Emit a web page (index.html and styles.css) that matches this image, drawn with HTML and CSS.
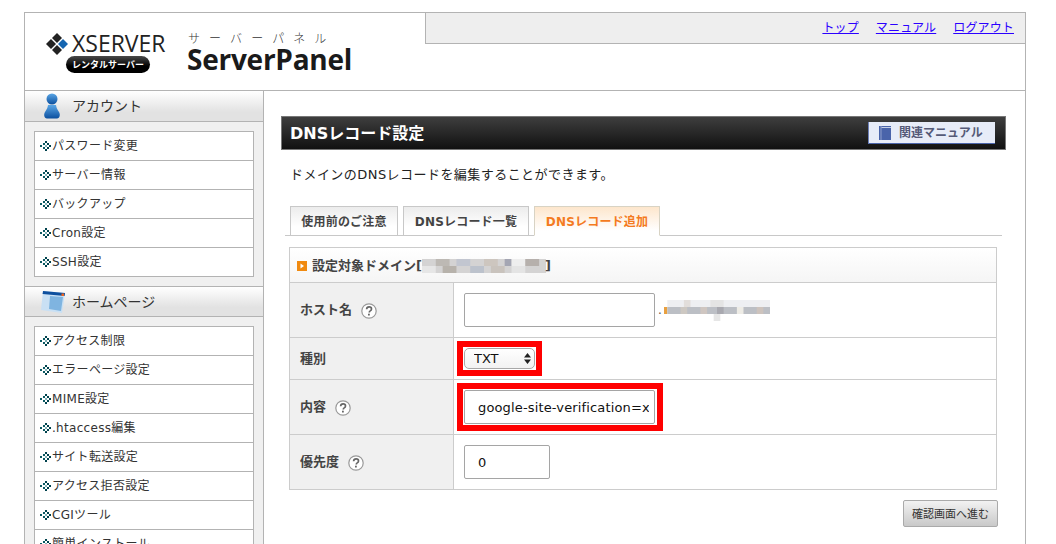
FILE: index.html
```html
<!DOCTYPE html>
<html lang="ja">
<head>
<meta charset="utf-8">
<title>ServerPanel</title>
<link rel="stylesheet" href="styles.css">
</head>
<body>
<svg class="defs" width="0" height="0" aria-hidden="true">
  <defs>
    <symbol id="bullet" viewBox="0 0 12 10">
      <rect x="0" y="4" width="2" height="2" fill="#0a5a63"/>
      <rect x="3" y="2" width="2" height="2" fill="#0a5a63"/>
      <rect x="3" y="6" width="2" height="2" fill="#0a5a63"/>
      <rect x="5" y="0" width="2" height="2" fill="#00424d"/>
      <rect x="5" y="8" width="2" height="2" fill="#00424d"/>
      <rect x="7" y="2" width="2" height="2" fill="#00424d"/>
      <rect x="7" y="6" width="2" height="2" fill="#00424d"/>
      <rect x="9" y="4" width="2" height="2" fill="#00424d"/>
      <rect x="5" y="4" width="2" height="2" fill="#7fb0b5"/>
    </symbol>
    <symbol id="help" viewBox="0 0 16 16">
      <circle cx="8" cy="8" r="7.2" fill="#fff" stroke="#999" stroke-width="1.2"/>
      <path d="M5.6 6.2c.1-1.5 1.1-2.3 2.5-2.3 1.400 0 2.400.8 2.400 2 0 1-.6 1.500-1.300 2-.6.4-.9.8-.9 1.500" fill="none" stroke="#666" stroke-width="1.700"/>
      <rect x="7" y="10.700" width="1.800" height="1.800" fill="#666"/>
    </symbol>
  </defs>
</svg>
<div class="page">
  <header class="header">
    <div class="logo">
      <div class="brand">
        <div class="brand-top">
          <svg class="brand-mark" viewBox="0 0 22 22" width="22" height="22" aria-hidden="true">
            <path d="M11 0l5 5-5 5-5-5z" fill="#222"/>
            <path d="M5 6l5 5-5 5-5-5z" fill="#222"/>
            <path d="M17 6l5 5-5 5-5-5z" fill="#1565b0"/>
            <path d="M11 12l5 5-5 5-5-5z" fill="#222"/>
          </svg>
          <span class="brand-name">XSERVER</span>
        </div>
        <div class="brand-pill">レンタルサーバー</div>
      </div>
      <div class="product">
        <div class="product-kana">サーバーパネル</div>
        <div class="product-name">ServerPanel</div>
      </div>
    </div>
    <nav class="topnav">
      <a href="#">トップ</a>
      <a href="#">マニュアル</a>
      <a href="#">ログアウト</a>
    </nav>
  </header>
  <div class="layout">
    <aside class="sidebar">
      <h2 class="side-head side-head-first">
        <svg class="side-icon" viewBox="0 0 18 26" width="18" height="26" aria-hidden="true">
          <defs>
            <linearGradient id="blue" x1="0" y1="0" x2="0" y2="1"><stop offset="0" stop-color="#5aa6e6"/><stop offset="1" stop-color="#0b4f9e"/></linearGradient>
          </defs>
          <ellipse cx="9" cy="6" rx="5.500" ry="5.500" fill="url(#blue)"/>
          <path d="M5 12h8c.5 3 1 4 3 7 1.500 2.500 1 6-2 6.500H4c-3-.5-3.500-4-2-6.500 2-3 2.500-4 3-7z" fill="url(#blue)"/>
        </svg>
        アカウント
      </h2>
      <div class="side-body">
        <ul class="side-list">
          <li><svg class="bullet"><use href="#bullet"/></svg>パスワード変更</li>
          <li><svg class="bullet"><use href="#bullet"/></svg>サーバー情報</li>
          <li><svg class="bullet"><use href="#bullet"/></svg>バックアップ</li>
          <li><svg class="bullet"><use href="#bullet"/></svg>Cron設定</li>
          <li><svg class="bullet"><use href="#bullet"/></svg>SSH設定</li>
        </ul>
      </div>
      <h2 class="side-head">
        <svg class="side-icon" viewBox="0 0 26 24" width="26" height="24" aria-hidden="true">
          <path d="M3 1l22 2-3 20-21-3z" fill="#c9e0f4"/>
          <path d="M10 6l13 1-2 14-12-2z" fill="#7fb4e0"/>
          <path d="M3 1l22 2-.4 3L2.600 4z" fill="#0d4f9e"/>
          <rect x="21.500" y="3.500" width="2.500" height="2.500" fill="#f0641e"/>
        </svg>
        ホームページ
      </h2>
      <div class="side-body">
        <ul class="side-list">
          <li><svg class="bullet"><use href="#bullet"/></svg>アクセス制限</li>
          <li><svg class="bullet"><use href="#bullet"/></svg>エラーページ設定</li>
          <li><svg class="bullet"><use href="#bullet"/></svg>MIME設定</li>
          <li><svg class="bullet"><use href="#bullet"/></svg>.htaccess編集</li>
          <li><svg class="bullet"><use href="#bullet"/></svg>サイト転送設定</li>
          <li><svg class="bullet"><use href="#bullet"/></svg>アクセス拒否設定</li>
          <li><svg class="bullet"><use href="#bullet"/></svg>CGIツール</li>
          <li><svg class="bullet"><use href="#bullet"/></svg>簡単インストール</li>
        </ul>
      </div>
    </aside>
    <main class="main">
      <div class="titlebar">
        <h1 class="title">DNSレコード設定</h1>
        <a class="manual" href="#">
          <svg viewBox="0 0 12 14" width="12" height="14" aria-hidden="true">
            <rect x="0" y="0" width="12" height="14" fill="#4a64aa"/>
            <rect x="1.500" y="0" width="1" height="14" fill="#8fa0cc"/>
            <rect x="2.500" y="1" width="9.500" height="1" fill="#c5cfe6"/>
          </svg>
          関連マニュアル
        </a>
      </div>
      <p class="lead">ドメインのDNSレコードを編集することができます。</p>
      <div class="tabs">
        <div class="tab tab-a">使用前のご注意</div>
        <div class="tab tab-b">DNSレコード一覧</div>
        <div class="tab tab-c tab-active">DNSレコード追加</div>
      </div>
      <div class="form">
        <div class="form-head">
          <svg class="form-mark" viewBox="0 0 10 10" width="10" height="10" aria-hidden="true">
            <rect width="10" height="10" fill="#f08a10"/>
            <path d="M3.500 2.500L7 5 3.500 7.500z" fill="#fff"/>
          </svg>
          設定対象ドメイン[<svg class="mosaic" viewBox="0 0 18 2" width="124" height="14" preserveAspectRatio="none" aria-hidden="true">
            <rect width="18" height="2" fill="#d4d3d3"/>
            <rect x="2" width="2" height="1" fill="#bdb9b4"/>
            <rect x="5" y="0" width="2" height="1" fill="#c2c6d0"/>
            <rect x="9" y="0" width="2" height="1" fill="#cdc6bf"/>
            <rect x="12" y="0" width="1" height="1" fill="#a4a6b3"/>
            <rect x="13" y="0" width="2" height="1" fill="#eeeeee"/>
            <rect x="15" y="0" width="2" height="1" fill="#b6b0ac"/>
            <rect x="0" y="1" width="2" height="1" fill="#e6e6e6"/>
            <rect x="3" y="1" width="2" height="1" fill="#b7b2ab"/>
            <rect x="7" y="1" width="2" height="1" fill="#bcc2cc"/>
            <rect x="10" y="1" width="2" height="1" fill="#c9c3bd"/>
            <rect x="13" y="1" width="2" height="1" fill="#e4e4e4"/>
          </svg>]
        </div>
        <div class="form-row">
          <div class="form-label">ホスト名<svg class="help"><use href="#help"/></svg></div>
          <div class="form-value">
            <input class="input input-wide" type="text" aria-label="ホスト名">
            <span class="dot">.</span>
            <svg class="mosaic-host" viewBox="0 0 32 3" width="106" height="21" preserveAspectRatio="none" aria-hidden="true">
              <rect x="0" y="1" width="1" height="1" fill="#e8a040"/>
              <rect x="1" width="31" height="1" fill="#eeeff2"/>
              <rect x="6" width="2" height="1" fill="#e2dedb"/>
              <rect x="14" width="4" height="1" fill="#e4e4e4"/>
              <rect x="1" y="1" width="31" height="1" fill="#bcbfc5"/>
              <rect x="5" y="1" width="2" height="1" fill="#cdc8c2"/>
              <rect x="11" y="1" width="2" height="1" fill="#cfc6c1"/>
              <rect x="16" y="1" width="2" height="1" fill="#a9a9b0"/>
              <rect x="22" y="1" width="2" height="1" fill="#eeece6"/>
              <rect x="28" y="1" width="2" height="1" fill="#cdc3bd"/>
              <rect x="15" y="2" width="2" height="1" fill="#e6e6e6"/>
            </svg>
          </div>
        </div>
        <div class="form-row">
          <div class="form-label">種別</div>
          <div class="form-value">
            <span class="marked select-wrap">
              <select class="select" aria-label="種別"><option>TXT</option></select>
              <svg class="select-arrows" viewBox="0 0 7 11" width="7" height="11" aria-hidden="true">
                <path d="M3.500 0L7 4.500H0zM3.500 11L0 6.500h7z" fill="#222"/>
              </svg>
            </span>
          </div>
        </div>
        <div class="form-row">
          <div class="form-label">内容<svg class="help"><use href="#help"/></svg></div>
          <div class="form-value">
            <span class="marked marked-input">
              <input class="input input-wide" type="text" aria-label="内容" value="google-site-verification=xxxxxxxx">
            </span>
          </div>
        </div>
        <div class="form-row">
          <div class="form-label">優先度<svg class="help"><use href="#help"/></svg></div>
          <div class="form-value">
            <input class="input input-small" type="text" aria-label="優先度" value="0">
          </div>
        </div>
      </div>
      <div class="actions">
        <button class="submit" type="button">確認画面へ進む</button>
      </div>
    </main>
  </div>
</div>
</body>
</html>
```
FILE: styles.css
```css
* { box-sizing: border-box; }
html, body { height: 100%; overflow: hidden; }
body {
  margin: 0;
  padding: 12px 30px 0 24px;
  background: #fff;
  color: #333;
  font-family: "DejaVu Sans", "Noto Sans CJK JP", sans-serif;
  font-size: 12px;
  line-height: 16px;
}
.defs { position: absolute; }
.page { width: 1002px; border: 1px solid #b3b3b3; border-bottom: 0; }

.header { display: flex; height: 78px; border-bottom: 1px solid #b3b3b3; }
.logo { width: 400px; display: flex; padding: 18px 0 0 21px; }
.brand { width: 120px; margin-right: 21px; }
.brand-top { display: flex; align-items: center; gap: 4px; height: 25px; }
.brand-name { font: 400 23px/25px "Open Sans", sans-serif; color: #222; }
.brand-pill {
  width: 84px; height: 17px; margin: 0 0 0 20px;
  border-radius: 9px;
  background: linear-gradient(#4a4a4a, #000 60%);
  color: #fff;
  font: 700 9px/17px "Noto Sans CJK JP", sans-serif;
  text-align: center;
}
.product-kana { font: 300 12px/14px "Noto Sans CJK JP", sans-serif; letter-spacing: 9.100px; color: #333; margin: 0 0 0 1px; }
.product-name { font: 700 28px/29px "Open Sans", sans-serif; color: #1a1a1a; letter-spacing: -.25px; }
.topnav {
  flex: 1; height: 31px;
  display: flex; justify-content: flex-end; align-items: center; gap: 17px;
  padding-right: 11px;
  background: #eee;
  border-left: 1px solid #b3b3b3;
  border-bottom: 1px solid #b3b3b3;
}
.topnav a { color: #2b00ff; font-size: 12px; letter-spacing: .15px; }

.layout { display: flex; }
.sidebar { width: 239px; flex: none; background: #f0f0f0; border-right: 1px solid #b3b3b3; }
.side-head {
  display: flex; align-items: center; gap: 6px;
  height: 31px; margin: 0; padding-left: 15px;
  font-size: 14px; font-weight: 400; color: #333;
  background: linear-gradient(#fff, #e2e2e2 70%);
  border-top: 1px solid #b3b3b3;
  border-bottom: 1px solid #b3b3b3;
}
.side-icon { flex: none; }
.side-head-first { border-top: 0; padding-left: 18px; gap: 11px; }
.side-body { padding: 9px; }
.side-list { list-style: none; margin: 0; padding: 0; width: 220px; background: #fff; border: 1px solid #b3b3b3; }
.side-list li {
  display: flex; align-items: center;
  height: 29px; padding-left: 5px;
  border-top: 1px solid #b3b3b3;
  letter-spacing: .3px;
  color: #333;
}
.side-list li:first-child { border-top: 0; height: 28px; }
.bullet { width: 12px; height: 10px; flex: none; }

.main { flex: 1; padding: 25px 18px 0 17px; }
.titlebar {
  display: flex; justify-content: space-between; align-items: center;
  width: 725px; height: 34px;
  padding: 0 10px 0 8px;
  border: 1px solid #777;
  background: linear-gradient(#3e3e3e, #111);
}
.title { margin: 1px 0 0; font-size: 16px; line-height: 20px; font-weight: 700; color: #fff; }
.manual {
  display: flex; align-items: center; gap: 8px;
  width: 127px; height: 22px; padding-left: 10px;
  background: #e7ecf8;
  border-bottom: 1px solid #4a64aa;
  border-left: 1px solid #6d80b8;
  color: #555a78; font-weight: 700; font-size: 12px;
  text-decoration: none;
}
.lead { margin: 16px 0 0 9px; height: 17px; line-height: 17px; font-size: 13px; letter-spacing: .45px; color: #222; }
.tabs { display: flex; width: 717px; height: 30px; margin: 23px 0 0 4px; padding-left: 5px; border-bottom: 1px solid #c8c8c8; }
.tab {
  height: 30px; text-align: center; line-height: 30px;
  border: 1px solid #c8c8c8; border-bottom: 1px solid #c8c8c8;
  background: linear-gradient(#ececec, #fff 70%);
  color: #444; font-weight: 700; letter-spacing: .2px;
}
.tab-a { width: 108px; margin-right: 5px; }
.tab-b { width: 126px; margin-right: 5px; }
.tab-c { width: 126px; }
.tab-active {
  color: #f47a20;
  border-color: #d8d3c4;
  border-bottom-color: #fff;
  background: linear-gradient(#fde6cc, #fff 85%);
}

.form { width: 708px; margin: 11px 0 0 8px; border: 1px solid #ccc; }
.form-head {
  display: flex; align-items: center;
  height: 34px; padding: 1px 0 0 7px;
  background: linear-gradient(#fff, #f5f5f5);
  color: #444; font-size: 13px; font-weight: 700;
}
.form-mark { margin-right: 5px; flex: none; }
.mosaic { margin: 0 -1px 0 0; }
.form-row { display: grid; grid-template-columns: 164px 1fr; border-top: 1px solid #ccc; }
.form-label {
  display: flex; align-items: center; gap: 9px;
  padding-left: 10px;
  background: #f0f0f0;
  border-right: 1px solid #ccc;
  color: #444; font-size: 13px; font-weight: 700;
}
.help { width: 16px; height: 16px; flex: none; margin-top: 2px; }
.form-value { display: flex; align-items: center; padding: 10px 0 10px 10px; }
.input {
  height: 34px; padding: 0 5px 0 13px;
  border: 1px solid #a5a5a5; border-radius: 2px;
  background: #fff; color: #111;
  font: 13px "DejaVu Sans", sans-serif;
  letter-spacing: .15px;
}
.input-wide { width: 191px; }
.input-small { width: 86px; }
.dot { margin-left: 3px; color: #555; }
.mosaic-host { margin-left: 2px; }

.marked { position: relative; display: inline-flex; }
.marked::after {
  content: ""; position: absolute; inset: -7px;
  border: 6px solid #f00; pointer-events: none;
}
.marked-input::after { inset: -7px -8px -7px -7px; }
.select-wrap { width: 71px; height: 21px; }
.select {
  appearance: none; -webkit-appearance: none;
  width: 71px; height: 21px; padding: 0 0 0 9px;
  border: 1px solid #a8a8a8; border-radius: 5px;
  background: linear-gradient(#fff, #f2f2f2);
  color: #111;
  font: 13px "DejaVu Sans", sans-serif;
}
.select-arrows { position: absolute; right: 4px; top: 5px; pointer-events: none; }

.actions { display: flex; justify-content: flex-end; width: 717px; margin-top: 10px; }
.submit {
  width: 95px; height: 27px; padding: 0 0 2px;
  border: 1px solid #aaa; border-radius: 2px;
  background: linear-gradient(#f2f2f2, #c9c9c9);
  color: #333;
  font: 11px "Noto Sans CJK JP", sans-serif;
}
```
